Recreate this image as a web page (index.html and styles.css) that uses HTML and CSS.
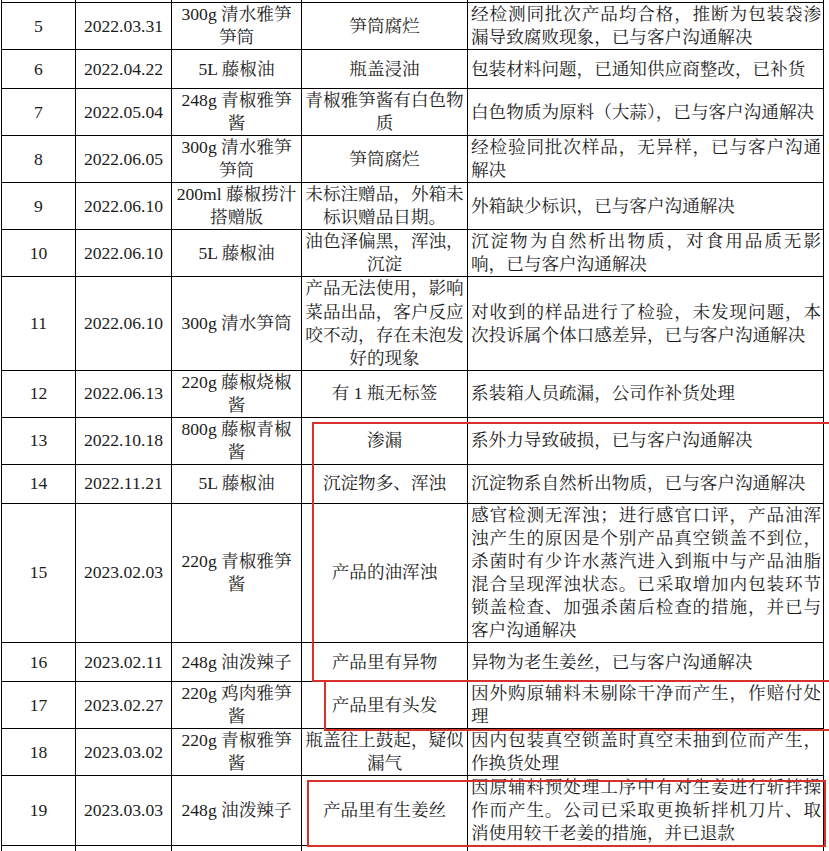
FILE: index.html
```html
<!DOCTYPE html>
<html lang="zh-CN">
<head>
<meta charset="utf-8">
<title>客户投诉处理记录</title>
<link rel="stylesheet" href="styles.css">
</head>
<body>
<div class="page">
  <table class="log">
    <colgroup>
      <col class="c-no">
      <col class="c-date">
      <col class="c-prod">
      <col class="c-issue">
      <col class="c-res">
    </colgroup>
    <tbody>
      <tr class="spacer"><td></td><td></td><td></td><td></td><td></td></tr>
      <tr><td class="no">5</td><td class="date">2022.03.31</td><td class="prod">300g 清水雅笋笋筒</td><td class="issue">笋筒腐烂</td><td class="res">经检测同批次产品均合格，推断为包装袋渗漏导致腐败现象，已与客户沟通解决</td></tr>
      <tr><td class="no">6</td><td class="date">2022.04.22</td><td class="prod">5L 藤椒油</td><td class="issue">瓶盖浸油</td><td class="res">包装材料问题，已通知供应商整改，已补货</td></tr>
      <tr><td class="no">7</td><td class="date">2022.05.04</td><td class="prod">248g 青椒雅笋酱</td><td class="issue">青椒雅笋酱有白色物质</td><td class="res">白色物质为原料（大蒜），已与客户沟通解决</td></tr>
      <tr><td class="no">8</td><td class="date">2022.06.05</td><td class="prod">300g 清水雅笋笋筒</td><td class="issue">笋筒腐烂</td><td class="res">经检验同批次样品，无异样，已与客户沟通解决</td></tr>
      <tr><td class="no">9</td><td class="date">2022.06.10</td><td class="prod">200ml 藤椒捞汁搭赠版</td><td class="issue">未标注赠品，外箱未标识赠品日期。</td><td class="res">外箱缺少标识，已与客户沟通解决</td></tr>
      <tr><td class="no">10</td><td class="date">2022.06.10</td><td class="prod">5L 藤椒油</td><td class="issue">油色泽偏黑，浑浊，沉淀</td><td class="res">沉淀物为自然析出物质，对食用品质无影响，已与客户沟通解决</td></tr>
      <tr><td class="no">11</td><td class="date">2022.06.10</td><td class="prod">300g 清水笋筒</td><td class="issue">产品无法使用，影响菜品出品，客户反应咬不动，存在未泡发好的现象</td><td class="res">对收到的样品进行了检验，未发现问题，本次投诉属个体口感差异，已与客户沟通解决</td></tr>
      <tr><td class="no">12</td><td class="date">2022.06.13</td><td class="prod">220g 藤椒烧椒酱</td><td class="issue">有 1 瓶无标签</td><td class="res">系装箱人员疏漏，公司作补货处理</td></tr>
      <tr><td class="no">13</td><td class="date">2022.10.18</td><td class="prod">800g 藤椒青椒酱</td><td class="issue">渗漏</td><td class="res">系外力导致破损，已与客户沟通解决</td></tr>
      <tr><td class="no">14</td><td class="date">2022.11.21</td><td class="prod">5L 藤椒油</td><td class="issue">沉淀物多、浑浊</td><td class="res">沉淀物系自然析出物质，已与客户沟通解决</td></tr>
      <tr><td class="no">15</td><td class="date">2023.02.03</td><td class="prod">220g 青椒雅笋酱</td><td class="issue">产品的油浑浊</td><td class="res">感官检测无浑浊；进行感官口评，产品油浑浊产生的原因是个别产品真空锁盖不到位，杀菌时有少许水蒸汽进入到瓶中与产品油脂混合呈现浑浊状态。已采取增加内包装环节锁盖检查、加强杀菌后检查的措施，并已与客户沟通解决</td></tr>
      <tr><td class="no">16</td><td class="date">2023.02.11</td><td class="prod">248g 油泼辣子</td><td class="issue">产品里有异物</td><td class="res">异物为老生姜丝，已与客户沟通解决</td></tr>
      <tr><td class="no">17</td><td class="date">2023.02.27</td><td class="prod">220g 鸡肉雅笋酱</td><td class="issue">产品里有头发</td><td class="res">因外购原辅料未剔除干净而产生，作赔付处理</td></tr>
      <tr><td class="no">18</td><td class="date">2023.03.02</td><td class="prod">220g 青椒雅笋酱</td><td class="issue">瓶盖往上鼓起，疑似漏气</td><td class="res">因内包装真空锁盖时真空未抽到位而产生，作换货处理</td></tr>
      <tr><td class="no">19</td><td class="date">2023.03.03</td><td class="prod">248g 油泼辣子</td><td class="issue">产品里有生姜丝</td><td class="res">因原辅料预处理工序中有对生姜进行斩拌操作而产生。公司已采取更换斩拌机刀片、取消使用较干老姜的措施，并已退款</td></tr>
      <tr class="tail"><td></td><td></td><td></td><td></td><td></td></tr>
    </tbody>
  </table>
  <div class="mark mark-a"></div>
  <div class="mark mark-b"></div>
  <div class="mark mark-c"></div>
</div>
</body>
</html>
```

FILE: styles.css
```css
html, body {
  margin: 0;
  padding: 0;
  background: #ffffff;
}

.page {
  position: relative;
  width: 829px;
  height: 851px;
  overflow: hidden;
}

.log {
  border-collapse: collapse;
  table-layout: fixed;
  width: 822px;
  margin-left: 1px;
  font-family: "Liberation Serif", "Noto Serif CJK SC", "Noto Sans CJK SC", serif;
  font-size: 17.6px;
  line-height: 23.05px;
  color: #1c1c1c;
}

.c-no { width: 74px; }
.c-date { width: 96px; }
.c-prod { width: 130px; }
.c-issue { width: 166px; }
.c-res { width: 356px; }

.log td {
  border: 1px solid #000;
  padding: 0 3px;
  height: 38px;
  vertical-align: middle;
  text-align: center;
}

.log .spacer td {
  border-top: 0;
  height: 2px;
  padding: 0;
}

.log .tail td {
  height: 40px;
  border-bottom: 0;
}

.log td.issue {
  padding: 0 2px;
}

.log td.res {
  text-align: justify;
  padding: 0 2px 0 3px;
}

.mark {
  position: absolute;
  border: 2px solid #d9302c;
  box-sizing: border-box;
}

.mark-a {
  left: 312px;
  top: 422px;
  width: 560px;
  height: 260px;
}

.mark-b {
  left: 324px;
  top: 680px;
  width: 560px;
  height: 51px;
}

.mark-c {
  left: 307px;
  top: 780px;
  width: 519px;
  height: 67px;
}
```
